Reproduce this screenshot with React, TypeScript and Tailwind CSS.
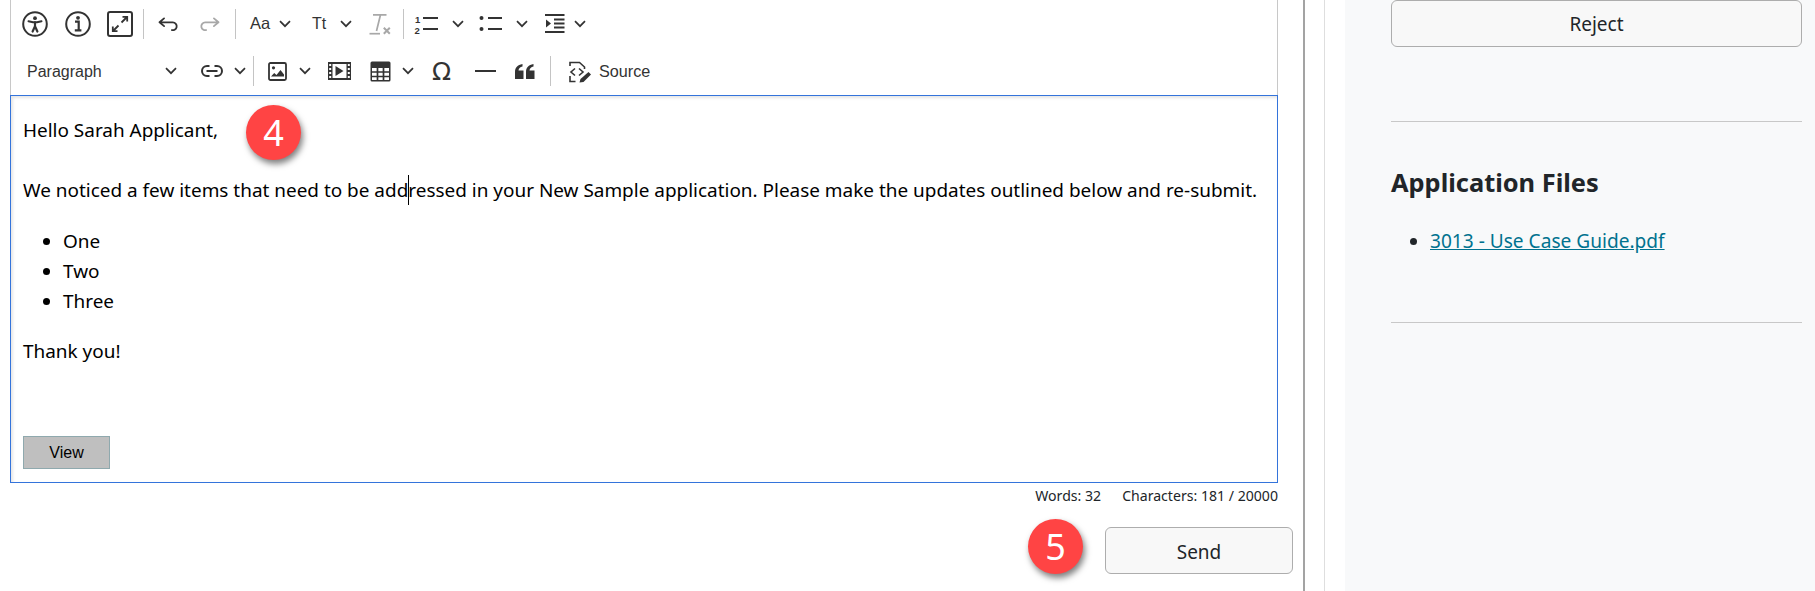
import React from "react";

const Chev = ({ ml }: { ml: string }) => (
  <svg width="12" height="8" viewBox="0 0 12 8" className={`${ml} shrink-0`} fill="none" stroke="#333" strokeWidth="1.7">
    <path d="M1 1.2 6 6.2 11 1.2" />
  </svg>
);
const Sep = ({ ml, h }: { ml: string; h: string }) => <div className={`${ml} ${h} w-px bg-[#c4c4c4] shrink-0`} />;

const Undo = ({ mirror, color }: { mirror?: boolean; color: string }) => (
  <svg width="24" height="24" viewBox="0 0 20 20" fill={color} className={mirror ? "-scale-x-100" : ""}>
    <path d="m5.042 9.367 2.189 1.837a.75.75 0 0 1-.965 1.149l-3.788-3.18a.747.747 0 0 1-.21-.284.75.75 0 0 1 .17-.945L6.23 4.762a.75.75 0 1 1 .964 1.15L4.863 7.866h8.917A.75.75 0 0 1 14 7.9a4 4 0 1 1-1.477 7.718l.344-1.489a2.5 2.5 0 1 0 1.094-4.73l.008-.032H5.042z" />
  </svg>
);

export default function App() {
  const sans = "font-['Noto_Sans','Open_Sans',sans-serif]";
  const arial = "font-['Liberation_Sans',Arial,sans-serif]";
  return (
    <div className={`relative flex h-[591px] w-[1815px] overflow-hidden bg-white ${sans} text-[#212529]`}>
      <div className="flex w-[1303px] shrink-0 flex-col pl-[10px]">
        <div className="flex w-[1268px] flex-col">
          <div className={`flex h-[95px] flex-col border-x border-[#c8c8c8] ${arial} text-[#333]`}>
            <div className="flex h-[47px] items-center pl-[11px]">
              <svg width="26" height="26" viewBox="0 0 26 26" fill="none" stroke="#333" strokeWidth="2">
                <circle cx="13" cy="13" r="11.8" />
                <circle cx="13" cy="7.2" r="1.9" fill="#333" stroke="none" />
                <path d="M6.5 10.2 11 11.3h4l4.5-1.1" strokeWidth="2" strokeLinecap="round" />
                <path d="M13 11.3v4.2M13 15.3l-2.4 5.2M13 15.3l2.4 5.2" strokeWidth="2.2" strokeLinecap="round" />
              </svg>
              <svg width="26" height="26" viewBox="0 0 26 26" fill="none" stroke="#333" strokeWidth="2" className="ml-[17px]">
                <circle cx="13" cy="13" r="11.8" />
                <circle cx="13" cy="6.8" r="1.9" fill="#333" stroke="none" />
                <path d="M10 10.6h3.7v8.4M9.8 19.4h6.6" strokeWidth="2.2" />
              </svg>
              <svg width="26" height="26" viewBox="0 0 26 26" fill="none" stroke="#333" strokeWidth="2" className="ml-[16px]">
                <rect x="1" y="1" width="24" height="24" rx="2" />
                <path d="M14.5 11.5 20 6M15.500 5.800H20.200V10.500M11.500 14.500 6 20M5.800 15.500V20.200H10.500" strokeWidth="1.800" />
              </svg>
              <Sep ml="ml-[10px]" h="h-[30px]" />
              <div className="ml-[12px]"><Undo color="#333" /></div>
              <div className="ml-[18px]"><Undo mirror color="#a8a8a8" /></div>
              <Sep ml="ml-[13px]" h="h-[30px]" />
              <span className="ml-[14px] w-[21px] text-[16.500px] leading-none">Aa</span>
              <Chev ml="ml-[8px]" />
              <span className="ml-[21px] w-[18px] text-[16px] leading-none">Tt</span>
              <Chev ml="ml-[10px]" />
              <svg width="22" height="24" viewBox="0 0 22 24" fill="none" stroke="#a8a8a8" className="ml-[17px]">
                <path d="M4 2.800h13.500M11.500 2.800 7.500 19" strokeWidth="1.700" />
                <path d="M0.500 21.700H11" strokeWidth="1.700" />
                <path d="M14.800 15.800 20.800 21.800M20.800 15.800 14.800 21.800" strokeWidth="2" />
              </svg>
              <Sep ml="ml-[12px]" h="h-[30px]" />
              <svg width="24" height="20" viewBox="0 0 24 20" fill="#333" stroke="none" className="ml-[10px]">
                <text x="1" y="8.500" fontSize="9.500" fontWeight="700" fontFamily="Liberation Sans">1</text>
                <text x="0.500" y="19.500" fontSize="9.500" fontWeight="700" fontFamily="Liberation Sans">2</text>
                <rect x="9" y="3" width="15" height="2" />
                <rect x="9" y="14" width="15" height="2" />
              </svg>
              <Chev ml="ml-[14px]" />
              <svg width="23" height="20" viewBox="0 0 23 20" fill="#333" className="ml-[15px]">
                <circle cx="2.500" cy="4" r="2" />
                <circle cx="2.500" cy="15" r="2" />
                <rect x="9" y="3" width="14" height="2" />
                <rect x="9" y="14" width="14" height="2" />
              </svg>
              <Chev ml="ml-[14px]" />
              <svg width="20" height="20" viewBox="0 0 20 20" fill="#333" className="ml-[17px]">
                <rect x="0" y="0" width="19.500" height="2" />
                <rect x="9" y="4.500" width="10.500" height="2" />
                <rect x="9" y="8.500" width="10.500" height="2" />
                <rect x="9" y="12.500" width="10.500" height="2" />
                <rect x="0" y="17" width="19.500" height="2" />
                <path d="M1 5.500 6 9.500 1 13.500z" />
              </svg>
              <Chev ml="ml-[9px]" />
            </div>
            <div className="flex h-[48px] items-center pl-[16px]">
              <span className="w-[138px] pt-[1px] text-[16px] leading-none">Paragraph</span>
              <Chev ml="ml-[0px]" />
              <svg width="22" height="14" viewBox="0 0 22 14" fill="none" stroke="#333" strokeWidth="2" className="ml-[24px]">
                <path d="M8.500 2H6a5 5 0 0 0 0 10h2.500M13.500 2H16a5 5 0 0 1 0 10h-2.500" />
                <path d="M5.500 7h11" />
              </svg>
              <Chev ml="ml-[11px]" />
              <Sep ml="ml-[7px]" h="h-[30px]" />
              <svg width="19" height="19" viewBox="0 0 19 19" fill="none" className="ml-[14px]">
                <rect x="1" y="1" width="17" height="17" rx="1.500" stroke="#333" strokeWidth="1.800" />
                <circle cx="5.500" cy="5.800" r="1.600" fill="#333" />
                <path d="M3 14.500 6.200 11l2.300 2L12.500 8 16 12.500v2z" fill="#333" />
              </svg>
              <Chev ml="ml-[12px]" />
              <svg width="23" height="18" viewBox="0 0 23 18" className="ml-[17px]" fill="#333">
                <path fillRule="evenodd" d="M0 0h23v18H0zM4.500 2v14H18.500V2zM1.200 2v2h2V2zM1.200 6v2h2V6zM1.200 10v2h2v-2zM1.200 14v2h2v-2zM19.800 2v2h2V2zM19.800 6v2h2V6zM19.800 10v2h2v-2zM19.800 14v2h2v-2z" />
                <path d="M7.500 4 15.500 9l-8 5z" />
              </svg>
              <svg width="21" height="21" viewBox="0 0 21 21" className="ml-[19px]">
                <rect x="0.500" y="0.500" width="20" height="20" rx="1.500" fill="#333" />
                <path d="M2 6.500h17v12.500H2z" fill="#fff" />
                <path d="M7.500 6v14M13.500 6v14M1 11h19M1 15.500h19" stroke="#333" strokeWidth="1.700" />
                <path d="M2 6.500h17" stroke="#333" />
              </svg>
              <Chev ml="ml-[11px]" />
              <span className="ml-[17px] text-[25px] leading-none font-['DejaVu_Sans',sans-serif] w-[21px] flex justify-center">Ω</span>
              <div className="ml-[23px] h-[2px] w-[21px] bg-[#333]" />
              <svg width="20" height="15" viewBox="0 0 20 15" fill="#333" className="ml-[19px]">
                <path d="M8.500 15H0V8C0 3.500 2.500 1 7.500 0v2.500C5 3 3.700 4.500 3.500 6.500h5zM19.500 15H11V8c0-4.500 2.500-7 7.500-8v2.500C16 3 14.700 4.500 14.500 6.500h5z" />
              </svg>
              <Sep ml="ml-[15px]" h="h-[30px]" />
              <svg width="25" height="25" viewBox="0 0 25 25" fill="none" stroke="#333" strokeWidth="1.600" className="ml-[17px]">
                <path d="M2 7V3.500h9.500L16.500 8v2M2 17v5.500h5.500" />
                <path d="M7 9.500 3 13l4 3.500M11 9.500 15 13l-4 3.500" strokeWidth="1.600" />
                <path d="M11.500 23.500l1-3.500 8-7 2.500 2.500-7.500 7.500z" fill="#333" stroke="none" />
              </svg>
              <span className="ml-[6px] text-[16.200px] leading-none">Source</span>
            </div>
          </div>

          <div className="h-[388px] border border-[#3474db] pl-[12px] pr-[12px] pt-[19px] text-[18.950px] leading-[30px] text-black shadow-[inset_2px_2px_3px_rgba(0,0,0,0.1)]">
            <p className="h-[30px]">Hello Sarah Applicant,</p>
            <p className="mt-[30px] h-[30px] whitespace-nowrap">
              We noticed a few items that need to be add
              <span className="inline-block h-[30px] w-px -mr-px bg-black align-top" />
              ressed in your New Sample application. Please make the updates outlined below and re-submit.
            </p>
            <ul className="mt-[21px] list-disc pl-[40px]">
              <li className="h-[30px]">One</li>
              <li className="h-[30px]">Two</li>
              <li className="h-[30px]">Three</li>
            </ul>
            <p className="mt-[20px] h-[30px]">Thank you!</p>
            <button className={`mt-[70px] block h-[33px] w-[87px] border border-[#8fa9ae] bg-[#bfbfbf] text-[16px] leading-none text-black ${arial}`}>View</button>
          </div>
        </div>
        <div className="flex w-[1268px] justify-end gap-[21px] pt-[3px] text-[14.100px] leading-[20px] text-[#212529]">
          <span>Words: 32</span>
          <span>Characters: 181 / 20000</span>
        </div>
        <div className="flex w-[1283px] justify-end pt-[21px]">
          <button className="h-[47px] w-[188px] rounded-[6px] border border-[#adadad] bg-[#f8f8f8] pt-[3px] text-[19px] text-[#212529]">Send</button>
        </div>
      </div>
      <div className="w-[21px] shrink-0 border-l-2 border-[#a3a3a3]" />
      <div className="w-[21px] shrink-0 border-l border-[#dedede]" />
      <div className="flex-1 bg-[#f8f9fa] pl-[46px] pr-[13px]">
        <button className="block h-[47px] w-full rounded-[6px] border border-[#adadad] bg-[#f8f8f8] pt-[2px] text-[19px] text-[#212529]">Reject</button>
        <div className="mt-[74px] h-px bg-[#c8c8c8]" />
        <h3 className="mt-[45px] text-[25.400px] font-bold leading-[30px] text-[#212529]">Application Files</h3>
        <ul className="mt-[29px] list-disc pl-[39px] text-[19.100px] leading-[30px]">
          <li><a className="text-[#00728f] underline" href="#">3013 - Use Case Guide.pdf</a></li>
        </ul>
        <div className="mt-[66px] h-px bg-[#c8c8c8]" />
      </div>

      <div className="absolute left-[246px] top-[105px] flex h-[55px] w-[55px] items-center justify-center rounded-full bg-[#ff4444] text-[36px] leading-none text-white shadow-[2px_4px_6px_rgba(0,0,0,0.5)]">4</div>
      <div className="absolute left-[1028px] top-[519px] flex h-[55px] w-[55px] items-center justify-center rounded-full bg-[#ff4444] text-[36px] leading-none text-white shadow-[2px_4px_6px_rgba(0,0,0,0.5)]">5</div>
    </div>
  );
}
